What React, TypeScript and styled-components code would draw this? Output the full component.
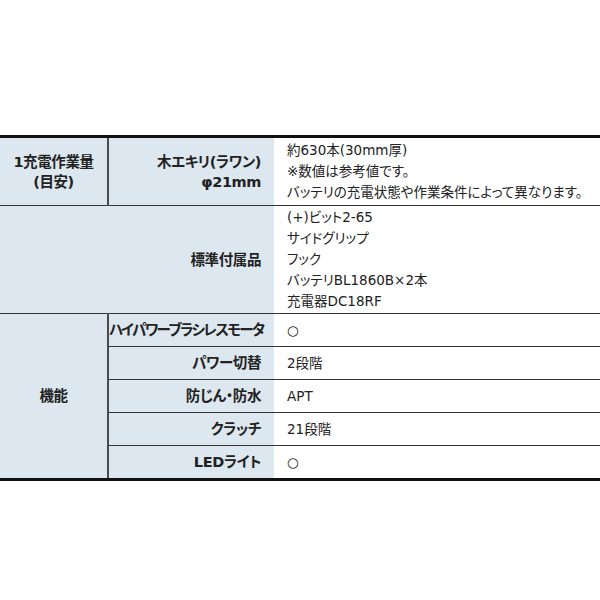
import React from 'react'
import styled, { createGlobalStyle } from 'styled-components'

const GlobalStyle = createGlobalStyle`
  html, body {
    margin: 0;
    padding: 0;
    background: #ffffff;
  }
  body {
    font-family: "DejaVu Sans", "Noto Sans CJK JP", sans-serif;
    font-feature-settings: "palt";
    color: #222;
  }
`

const Page = styled.div`
  width: 600px;
  height: 600px;
  padding-top: 135px;
  box-sizing: border-box;
  overflow: hidden;
`

const SpecTable = styled.table`
  width: 600px;
  table-layout: fixed;
  border-collapse: collapse;
  border-top: 3px solid #111;
  border-bottom: 3px solid #111;
`

const Row = styled.tr`
  border-bottom: 1px solid #333;
  &:last-child {
    border-bottom: none;
  }
`

const Head = styled.th<{ $align?: 'center' | 'right'; $divider?: boolean; $tight?: boolean }>`
  background: #dde7ef;
  font-size: 14.5px;
  font-weight: 700;
  line-height: 20px;
  letter-spacing: ${({ $tight }) => ($tight ? '-1.6px' : '-0.4px')};
  text-align: ${({ $align }) => $align || 'right'};
  vertical-align: middle;
  padding: 0 13px 0 0;
  white-space: nowrap;
  border-right: ${({ $divider }) => ($divider ? '2px solid #4a4a4a' : 'none')};
  ${({ $align }) => ($align === 'center' ? 'padding: 0;' : '')}
`

const Value = styled.td<{ $top?: number; $bottom?: number }>`
  font-size: 13.5px;
  font-weight: 400;
  line-height: 21px;
  padding: ${({ $top }) => $top ?? 0}px 13px ${({ $bottom }) => $bottom ?? 0}px;
  vertical-align: middle;
  white-space: nowrap;
`

const Line = styled.div``

interface Feature {
  label: string
  value: string
}

const features: Feature[] = [
  { label: 'ハイパワーブラシレスモータ', value: '○' },
  { label: 'パワー切替', value: '2段階' },
  { label: '防じん・防水', value: 'APT' },
  { label: 'クラッチ', value: '21段階' },
  { label: 'LEDライト', value: '○' },
]

const accessories = ['(+)ビット2-65', 'サイドグリップ', 'フック', 'バッテリBL1860B×2本', '充電器DC18RF']

const App: React.FC = (): JSX.Element => (
  <Page>
    <GlobalStyle />
    <SpecTable>
      <colgroup>
        <col style={{ width: 108 }} />
        <col style={{ width: 166 }} />
        <col />
      </colgroup>
      <tbody>
        <Row>
          <Head $align="center" $divider>
            <Line>1充電作業量</Line>
            <Line>(目安)</Line>
          </Head>
          <Head>
            <Line>木エキリ(ラワン)</Line>
            <Line>φ21mm</Line>
          </Head>
          <Value $top={2} $bottom={2}>
            <Line>約630本(30mm厚)</Line>
            <Line>※数値は参考値です。</Line>
            <Line>バッテリの充電状態や作業条件によって異なります。</Line>
          </Value>
        </Row>
        <Row>
          <Head colSpan={2}>標準付属品</Head>
          <Value $top={1} $bottom={1}>
            {accessories.map((a, i) => (
              <Line key={i}>{a}</Line>
            ))}
          </Value>
        </Row>
        {features.map((f, i) => (
          <Row key={i}>
            {i === 0 && (
              <Head $align="center" $divider rowSpan={features.length}>
                機能
              </Head>
            )}
            <Head $tight={f.label.length > 10}>{f.label}</Head>
            <Value $top={6} $bottom={5}>
              {f.value}
            </Value>
          </Row>
        ))}
      </tbody>
    </SpecTable>
  </Page>
)

export default App
